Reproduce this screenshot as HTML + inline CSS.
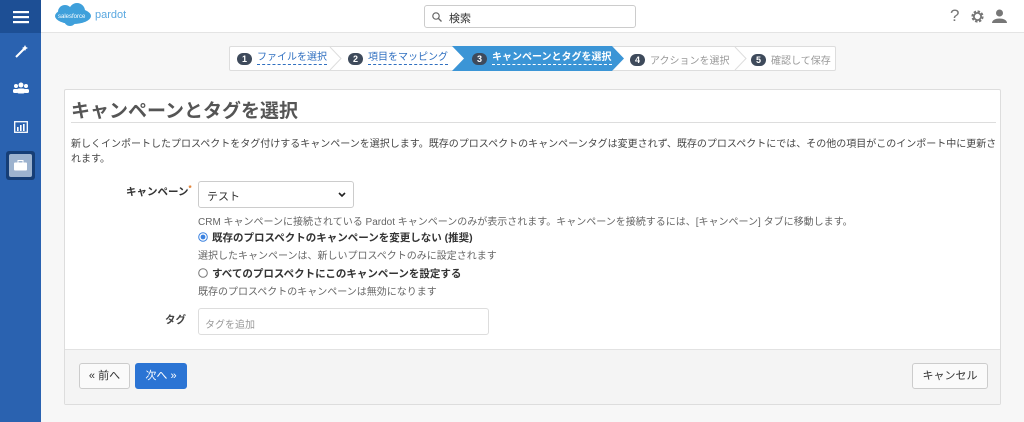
<!DOCTYPE html>
<html><head><meta charset="utf-8"><style>
*{box-sizing:border-box;margin:0;padding:0}
body{width:1024px;height:422px;overflow:hidden;background:#f7f7f7;font-family:"Liberation Sans","Noto Sans CJK JP",sans-serif;color:#333;position:relative}
.side{position:absolute;left:0;top:0;width:41px;height:422px;background:#2a62b0}
.side .top{height:33px;background:#1d4f95;display:flex;align-items:center;justify-content:center}
.ic{position:absolute;left:0;width:41px;display:flex;justify-content:center}
.hdr{position:absolute;left:41px;top:0;right:0;height:33px;background:#fff;border-bottom:1px solid #e4e4e4}
.search{position:absolute;top:5px;width:212px;height:23px;border:1px solid #ccc;border-radius:3px;font-size:11px;padding:4px 0 0 24px;color:#333}
.crumb{position:absolute;left:229px;top:46px;width:607px;height:25px;border:1px solid #ddd;border-radius:2px;background:#fff;font-size:10px}
.st{position:absolute;top:5px;display:flex;align-items:center;white-space:nowrap}
.n{display:inline-block;width:15px;height:12px;border-radius:6px;background:#3e4a5b;color:#fff;font-size:9px;font-weight:bold;text-align:center;line-height:12px;margin-right:5px}
.lk{color:#2f6fc0;border-bottom:1px dashed #2f6fc0;line-height:12px}
.panel{position:absolute;left:64px;top:89px;width:937px;height:316px;background:#fff;border:1px solid #ddd;border-radius:2px}
.foot{position:absolute;left:0;right:0;bottom:0;height:55px;background:#f4f4f4;border-top:1px solid #e2e2e2}
.btn{position:absolute;top:13px;height:26px;border:1px solid #ccc;border-radius:3px;background:#fafafa;font-size:11px;text-align:center;line-height:24px;color:#333}
.t{position:absolute;white-space:nowrap;font-size:10.5px}
</style></head><body>
<div class="side">
 <div class="top"><svg width="16" height="14"><rect y="1" width="16" height="2.2" fill="#fff"/><rect y="6" width="16" height="2.2" fill="#fff"/><rect y="11" width="16" height="2.2" fill="#fff"/></svg></div>
 <div class="ic" style="top:44px"><svg width="14" height="14"><path d="M2 13L10 5" stroke="#fff" stroke-width="2"/><path d="M11 1l1 2 2 1-2 1-1 2-1-2-2-1 2-1z" fill="#fff"/></svg></div>
 <div class="ic" style="top:82px"><svg width="16" height="12"><circle cx="8" cy="3" r="2.5" fill="#fff"/><circle cx="3" cy="4" r="2" fill="#fff"/><circle cx="13" cy="4" r="2" fill="#fff"/><rect x="4" y="6.5" width="8" height="5" rx="2" fill="#fff"/><rect x="0" y="7" width="5" height="4" rx="1.5" fill="#fff"/><rect x="11" y="7" width="5" height="4" rx="1.5" fill="#fff"/></svg></div>
 <div class="ic" style="top:121px"><svg width="14" height="12"><rect x="0.7" y="0.7" width="12.6" height="10.6" fill="none" stroke="#fff" stroke-width="1.3"/><rect x="3" y="6" width="1.6" height="4" fill="#fff"/><rect x="6" y="4" width="1.6" height="6" fill="#fff"/><rect x="9" y="3" width="1.6" height="7" fill="#fff"/></svg></div>
 <div style="position:absolute;left:6px;top:151px;width:29px;height:29px;background:#163e76;border-radius:3px;padding:3px"><div style="width:23px;height:23px;background:#9db3cf;border-radius:2px;display:flex;align-items:center;justify-content:center"><svg width="13" height="11"><rect x="4" y="0.5" width="5" height="3" fill="none" stroke="#fff"/><rect x="0" y="2.5" width="13" height="8" rx="1" fill="#fff"/></svg></div></div>
</div>
<div class="hdr">
 <svg style="position:absolute;left:12px;top:2px" width="40" height="25"><ellipse cx="20" cy="14" rx="18" ry="8" fill="#3fa0db"/><circle cx="12" cy="10" r="7" fill="#3fa0db"/><circle cx="24" cy="9" r="8" fill="#3fa0db"/><circle cx="17" cy="18" r="6" fill="#3fa0db"/><text x="5" y="16" font-size="6" fill="#fff" font-family="Liberation Sans">salesforce</text></svg>
 <div style="position:absolute;left:54px;top:9px;font-size:11px;color:#5aa8e0">pardot</div>
 <div class="search" style="left:383px"><svg style="position:absolute;left:7px;top:6px" width="10" height="10"><circle cx="4" cy="4" r="3.2" fill="none" stroke="#666" stroke-width="1.2"/><path d="M6.5 6.5L9.5 9.5" stroke="#666" stroke-width="1.3"/></svg>検索</div>
 <div style="position:absolute;left:909px;top:6px;font-size:17px;color:#777">?</div>
 <svg style="position:absolute;left:930px;top:10px" width="13" height="13"><circle cx="6.5" cy="6.5" r="4.6" fill="none" stroke="#777" stroke-width="3" stroke-dasharray="2.2 1.4"/><circle cx="6.5" cy="6.5" r="3.6" fill="none" stroke="#777" stroke-width="1.8"/></svg>
 <svg style="position:absolute;left:951px;top:9px" width="15" height="14"><circle cx="7.5" cy="4" r="3.5" fill="#777"/><path d="M0 14c0-6 15-6 15 0z" fill="#777"/></svg>
</div>
<div class="crumb">
 <svg style="position:absolute;left:222px;top:-1px" width="172" height="25"><path d="M0 0H160L172 12.5 160 25H0L12 12.5Z" fill="#3b95d6"/></svg>
 <svg style="position:absolute;left:0;top:0" width="607" height="23"><path d="M100 0l11 11.5L100 23M505 0l11 11.5L505 23" fill="none" stroke="#ddd"/></svg>
 <div class="st" style="left:7px"><span class="n">1</span><span class="lk">ファイルを選択</span></div>
 <div class="st" style="left:118px"><span class="n">2</span><span class="lk">項目をマッピング</span></div>
 <div class="st" style="left:242px;color:#fff;font-weight:bold"><span class="n">3</span><span style="border-bottom:1px dashed #fff;line-height:12px">キャンペーンとタグを選択</span></div>
 <div class="st" style="left:400px;color:#999"><span class="n">4</span>アクションを選択</div>
 <div class="st" style="left:521px;color:#999"><span class="n">5</span>確認して保存</div>
</div>
<div class="panel">
 <div class="t" style="left:6px;top:6px;font-size:19px;font-weight:bold;color:#555">キャンペーンとタグを選択</div>
 <div style="position:absolute;left:6px;right:4px;top:32px;border-top:1px solid #ddd"></div>
 <div class="t" style="left:6px;top:47px;line-height:15px;white-space:normal;width:928px;color:#444;font-size:10px">新しくインポートしたプロスペクトをタグ付けするキャンペーンを選択します。既存のプロスペクトのキャンペーンタグは変更されず、既存のプロスペクトにでは、その他の項目がこのインポート中に更新されます。</div>
 <div class="t" style="left:61px;top:94px;font-weight:bold">キャンペーン<span style="color:#e07b2a;font-size:8px;vertical-align:top">*</span></div>
 <div style="position:absolute;left:133px;top:91px;width:156px;height:27px;border:1px solid #ccc;border-radius:3px;font-size:11px;padding:6px 0 0 8px">テスト<svg style="position:absolute;right:7px;top:10px" width="8" height="6"><path d="M1 1l3 3 3-3" fill="none" stroke="#222" stroke-width="1.6"/></svg></div>
 <div class="t" style="left:133px;top:123px;color:#666;font-size:10px">CRM キャンペーンに接続されている Pardot キャンペーンのみが表示されます。キャンペーンを接続するには、[キャンペーン] タブに移動します。</div>
 <svg style="position:absolute;left:133px;top:142px" width="10" height="10"><circle cx="5" cy="5" r="4.3" fill="#fff" stroke="#3b82e0"/><circle cx="5" cy="5" r="2.4" fill="#3b82e0"/></svg>
 <div class="t" style="left:147px;top:140px;font-weight:bold">既存のプロスペクトのキャンペーンを変更しない (推奨)</div>
 <div class="t" style="left:133px;top:157px;color:#666;font-size:10px">選択したキャンペーンは、新しいプロスペクトのみに設定されます</div>
 <svg style="position:absolute;left:133px;top:178px" width="10" height="10"><circle cx="5" cy="5" r="4.3" fill="#fff" stroke="#777"/></svg>
 <div class="t" style="left:147px;top:176px;font-weight:bold">すべてのプロスペクトにこのキャンペーンを設定する</div>
 <div class="t" style="left:133px;top:193px;color:#666;font-size:10px">既存のプロスペクトのキャンペーンは無効になります</div>
 <div class="t" style="left:100px;top:222px;font-weight:bold;color:#444">タグ</div>
 <div style="position:absolute;left:133px;top:218px;width:291px;height:27px;border:1px solid #ddd;border-radius:3px;font-size:10px;color:#999;padding:7px 0 0 6px">タグを追加</div>
 <div class="foot">
  <div class="btn" style="left:14px;width:51px">« 前へ</div>
  <div class="btn" style="left:70px;width:52px;background:#2b74d4;border-color:#2b74d4;color:#fff">次へ »</div>
  <div class="btn" style="left:847px;width:76px">キャンセル</div>
 </div>
</div>
</body></html>
